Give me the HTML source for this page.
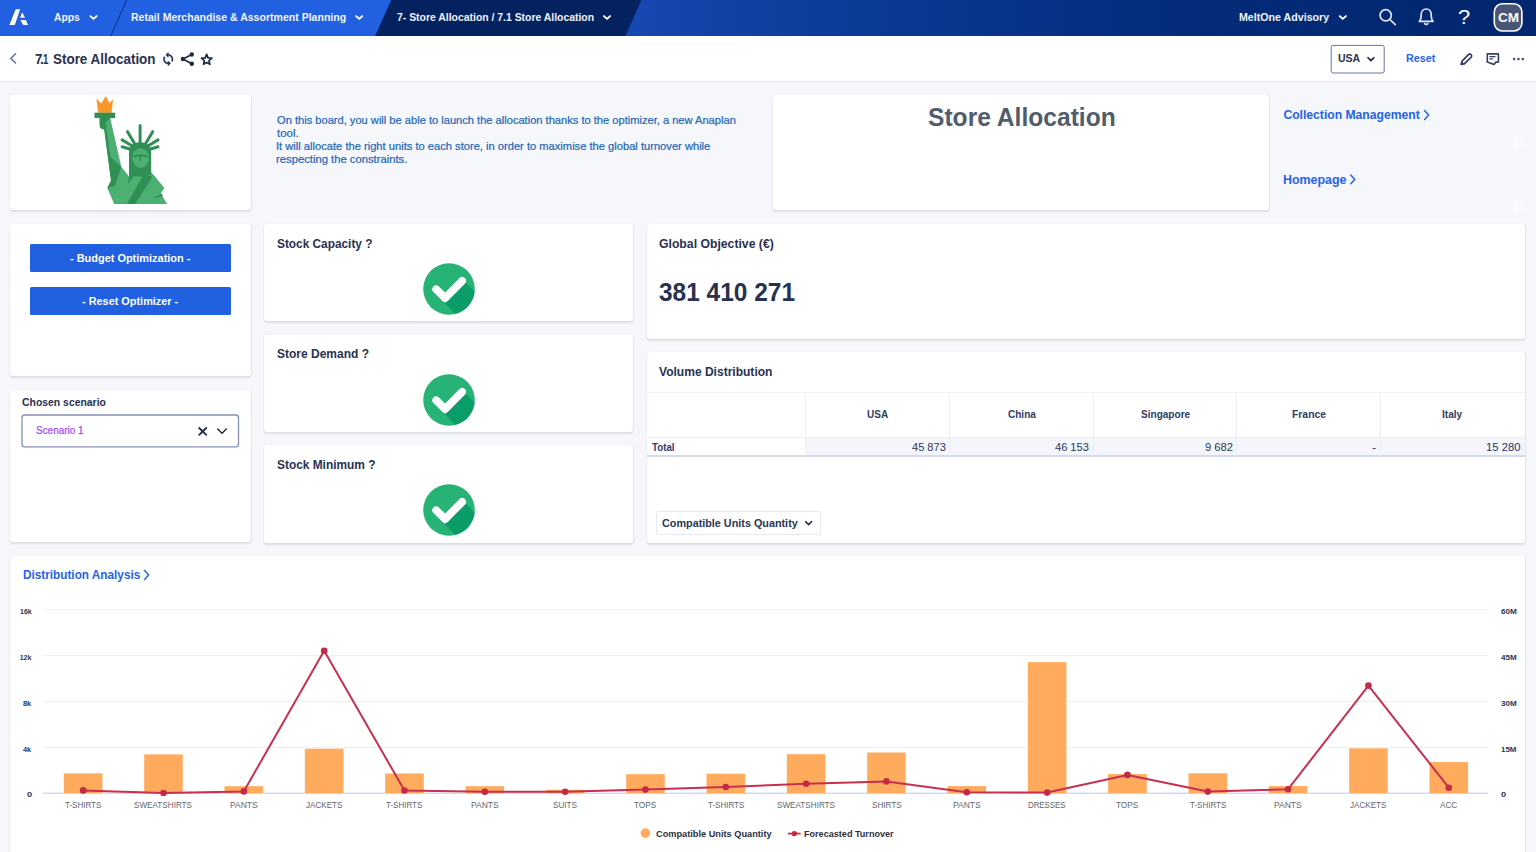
<!DOCTYPE html>
<html><head><meta charset="utf-8"><title>7.1 Store Allocation</title>
<style>
html,body{margin:0;padding:0}
body{width:1536px;height:852px;overflow:hidden;background:#f6f7fa;position:relative;font-family:"Liberation Sans",sans-serif}
#nav{position:absolute;left:0;top:0;width:1536px;height:36px;overflow:hidden}
#sub{position:absolute;left:0;top:36px;width:1536px;height:45px;background:#fff;border-bottom:1px solid #e3e9f6}
.t{position:absolute;white-space:nowrap;transform-origin:0 50%}
.card{position:absolute;background:#fff;border-radius:3px;box-shadow:0 1.5px 2px rgba(20,25,45,0.11),0.5px 0 1.5px rgba(20,25,45,0.05);box-sizing:border-box}
.btn{position:absolute;background:#2160e0;border-radius:1.5px}
</style></head><body>
<div id="nav">
<svg width="1536" height="36" viewBox="0 0 1536 36" style="position:absolute;left:0;top:0">
<defs><linearGradient id="ng" x1="0" x2="1" y1="0" y2="0">
<stop offset="0.04" stop-color="#1747b0"/><stop offset="0.21" stop-color="#0e3d9d"/><stop offset="0.43" stop-color="#07338a"/><stop offset="0.64" stop-color="#042b79"/><stop offset="1" stop-color="#03276e"/></linearGradient></defs>
<rect x="0" y="0" width="1536" height="36" fill="#2160e0"/>
<rect x="600" y="0" width="936" height="36" fill="url(#ng)"/>
<polygon points="391.2,0 641.5,0 625.4,36 375,36" fill="#04225f"/>
<line x1="126.6" y1="0" x2="110.8" y2="36" stroke="#0b2f8a" stroke-width="1"/>
<!-- logo -->
<polygon points="15.7,9.3 20.1,9.3 14.8,25 9.4,25" fill="#fff"/>
<polygon points="22.2,12.2 25,17.8 20.1,17.8" fill="#fff"/>
<polygon points="20.4,20.1 25.8,20.1 28.1,25 23.1,25" fill="#fff"/>
<!-- chevrons -->
<g fill="none" stroke="#fff" stroke-width="1.9" stroke-linecap="round" stroke-linejoin="round">
<polyline points="90.4,16.1 93.5,18.9 96.6,16.1"/>
<polyline points="356.1,16.1 359.2,18.9 362.3,16.1"/>
<polyline points="603.9,16.1 607,18.9 610.1,16.1"/>
<polyline points="1339.7,16.1 1342.8,18.9 1345.9,16.1"/>
</g>
<!-- search -->
<g fill="none" stroke="#e4e8f3" stroke-width="1.7" stroke-linecap="round">
<circle cx="1385.7" cy="15.3" r="5.6"/><line x1="1389.9" y1="19.5" x2="1395.3" y2="24.6"/>
</g>
<!-- bell -->
<g fill="none" stroke="#e4e8f3" stroke-width="1.7" stroke-linecap="round" stroke-linejoin="round">
<path d="M1419.3 21.3 C1421.3 19.6 1421.2 17.5 1421.2 14.6 C1421.2 11.2 1423.3 9 1426.2 9 C1429.1 9 1431.2 11.2 1431.2 14.6 C1431.2 17.5 1431.1 19.6 1433.1 21.3 Z"/>
<path d="M1424.6 23.6 Q1426.2 25.2 1427.8 23.6"/>
</g>
<!-- avatar -->
<rect x="1494.3" y="3.8" width="27.6" height="27.2" rx="8" fill="#4b5676" stroke="#fff" stroke-width="1.6"/>
</svg>
</div>
<div class="t" style="left:54.34px;top:9px;font-size:11.59px;line-height:16px;height:16px;font-weight:700;color:#f1f4fb;transform:scaleX(0.8928);">Apps</div>
<div class="t" style="left:131.11px;top:9px;font-size:11.59px;line-height:16px;height:16px;font-weight:700;color:#f1f4fb;transform:scaleX(0.9103);">Retail Merchandise &amp; Assortment Planning</div>
<div class="t" style="left:396.88px;top:9px;font-size:11.59px;line-height:16px;height:16px;font-weight:700;color:#f1f4fb;transform:scaleX(0.8993);">7- Store Allocation / 7.1 Store Allocation</div>
<div class="t" style="left:1238.81px;top:9px;font-size:11.45px;line-height:16px;height:16px;font-weight:700;color:#f1f4fb;transform:scaleX(0.9309);">MeltOne Advisory</div>
<div class="t" style="left:1458.33px;top:4px;font-size:19.55px;line-height:26px;height:26px;color:#fff;transform:scaleX(1.1187);">?</div>
<div class="t" style="left:1497.86px;top:9px;font-size:12.29px;line-height:18px;height:18px;font-weight:700;color:#fff;transform:scaleX(1.1036);">CM</div>
<div id="sub"></div>
<svg width="1536" height="46" viewBox="0 36 1536 46" style="position:absolute;left:0;top:36px">
<polyline points="15.6,53.8 10.8,58.4 15.6,63" fill="none" stroke="#5d6b98" stroke-width="1.4" stroke-linecap="round" stroke-linejoin="round"/>
<!-- refresh -->
<path transform="translate(161 51.95) scale(0.6)" fill="#26335a" stroke="#26335a" stroke-width="0.9" stroke-linejoin="round" d="M12 4V1L8 5l4 4V6c3.31 0 6 2.69 6 6 0 1.01-.25 1.97-.7 2.8l1.46 1.46C19.54 15.03 20 13.57 20 12c0-4.42-3.58-8-8-8zm0 14c-3.31 0-6-2.69-6-6 0-1.01.25-1.97.7-2.8L5.24 7.74C4.46 8.97 4 10.43 4 12c0 4.42 3.58 8 8 8v3l4-4-4-4v3z"/>
<!-- share -->
<g stroke="#1f2a44" stroke-width="1.6" fill="#1f2a44">
<line x1="182.9" y1="59" x2="191.8" y2="54.5"/><line x1="182.9" y1="59" x2="191.8" y2="63.7"/>
<circle cx="191.8" cy="54.5" r="1.4"/><circle cx="191.8" cy="63.7" r="1.4"/><circle cx="182.9" cy="59" r="1.4"/>
</g>
<!-- star -->
<polygon points="206.65,54.40 208.09,57.92 211.88,58.20 208.98,60.66 209.88,64.35 206.65,62.35 203.42,64.35 204.32,60.66 201.42,58.20 205.21,57.92" fill="none" stroke="#1f2a44" stroke-width="1.7" stroke-linejoin="round"/>
<!-- USA box -->
<rect x="1331.2" y="45.4" width="53" height="27.6" rx="2" fill="#fff" stroke="#6674a3" stroke-width="1"/>
<polyline points="1367.9,57.7 1370.9,60.6 1373.9,57.7" fill="none" stroke="#1f2a44" stroke-width="1.6" stroke-linecap="round" stroke-linejoin="round"/>
<!-- pencil -->
<g fill="none" stroke="#333e62" stroke-width="1.7" stroke-linejoin="round" stroke-linecap="round">
<path d="M1461.2 64.5 L1461.9 61.3 L1468.6 54.4 Q1469.7 53.4 1470.8 54.5 L1471.2 54.9 Q1472.2 56 1471.2 57.1 L1464.3 63.9 Z"/>
<path d="M1461.4 64.3 L1462.6 62.4 L1463.4 63.4 Z" fill="#333e62" stroke-width="1"/>
</g>
<!-- comment -->
<g fill="none" stroke="#333e62" stroke-width="1.6" stroke-linejoin="round" stroke-linecap="round">
<path d="M1487.3 53.9 H1498.4 V62.1 H1495.9 L1494.1 64.5 L1487.3 61.9 Z"/>
<path d="M1489.9 56.6 H1495.1 M1489.9 58.9 H1492.6" stroke-width="1.3"/>
</g>
<g fill="#4a5479"><circle cx="1514.1" cy="59.1" r="1.3"/><circle cx="1518.45" cy="59.1" r="1.3"/><circle cx="1522.8" cy="59.1" r="1.3"/></g>
</svg>
<div class="t" style="left:34.57px;top:49px;font-size:13.97px;line-height:20px;height:20px;font-weight:700;color:#283150;transform:scaleX(0.9496);">7</div>
<div class="t" style="left:40.00px;top:49px;font-size:13.97px;line-height:20px;height:20px;font-weight:700;color:#283150;transform:scaleX(0.9876);">.</div>
<div class="t" style="left:43.13px;top:49px;font-size:13.97px;line-height:20px;height:20px;font-weight:700;color:#283150;transform:scaleX(0.6855);">1</div>
<div class="t" style="left:52.90px;top:49px;font-size:13.97px;line-height:20px;height:20px;font-weight:700;color:#283150;transform:scaleX(0.9619);">Store Allocation</div>
<div class="t" style="left:1338.27px;top:50px;font-size:10.89px;line-height:16px;height:16px;font-weight:700;color:#283150;transform:scaleX(0.9655);">USA</div>
<div class="t" style="left:1405.60px;top:50px;font-size:10.89px;line-height:16px;height:16px;font-weight:700;color:#2563eb;transform:scaleX(0.9891);">Reset</div>
<div class="card" style="left:9.5px;top:95.3px;width:241.0px;height:114.7px;"></div>
<div class="card" style="left:773px;top:95.3px;width:496.29999999999995px;height:114.7px;"></div>
<div class="card" style="left:9.5px;top:224px;width:241.0px;height:152px;"></div>
<div class="card" style="left:9.5px;top:390px;width:241.0px;height:152px;"></div>
<div class="card" style="left:264px;top:224px;width:369px;height:96.80000000000001px;"></div>
<div class="card" style="left:264px;top:334.5px;width:369px;height:97.30000000000001px;"></div>
<div class="card" style="left:264px;top:445px;width:369px;height:97.5px;"></div>
<div class="card" style="left:646.5px;top:224px;width:878.0px;height:114.5px;"></div>
<div class="card" style="left:646.5px;top:352px;width:878.0px;height:190.5px;"></div>
<div class="card" style="left:9.5px;top:555.5px;width:1515.0px;height:314.5px;"></div>
<svg width="241" height="114" viewBox="9.5 95.5 241 114" style="position:absolute;left:9.5px;top:95.5px">
<polygon points="97.9,112 96.3,98.9 101,103.4 105.1,96.1 109.1,103.2 112.1,99.3 110.9,112" fill="#f9962a" stroke="#f9962a" stroke-width="0.6" stroke-linejoin="round"/>
<rect x="94" y="112.2" width="20.7" height="5.3" fill="#2f8f55"/>
<path d="M99 117.5 H109.7 V124 L104.5 129 Q99 129 99 124.5 Z" fill="#2f8f55"/>
<polygon points="103.1,124 109.7,117.6 120.9,166.7 128.5,176 113,200 106.9,187.6 110.5,180" fill="#4bb072"/>
<polygon points="103.1,124 105.1,123 109.8,156 120.7,166.6 114.8,185.5 106.9,187.6 110.5,180" fill="#2f8f55"/>
<polygon points="106.9,187.6 114.8,185.5 120.7,166.6 128.5,177 139.6,172 150.7,172 152.8,173.9 163.9,187.6 160.2,192.9 166.6,203.5 113.7,203.5" fill="#4bb072"/>
<polygon points="142.3,175 149.7,175 151.6,177 134.6,203.5 126.4,203.5" fill="#2f8f55"/>
<polygon points="128.5,176 133,176 127.5,183.5" fill="#2f8f55"/>
<polygon points="152.8,198.2 161.3,192.9 162.4,195.6" fill="#2f8f55"/>
<g stroke="#2f8f55" stroke-width="3" stroke-linecap="round">
<line x1="139.6" y1="125" x2="139.6" y2="142"/>
<line x1="127" y1="131.2" x2="134" y2="143"/><line x1="152.2" y1="131.2" x2="145.2" y2="143"/>
<line x1="121.6" y1="139.4" x2="131" y2="145"/><line x1="157.5" y1="139.4" x2="148.2" y2="145"/>
<line x1="121.6" y1="146.3" x2="130" y2="148.7"/><line x1="157.5" y1="146.3" x2="149.2" y2="148.7"/>
</g>
<path d="M128.5 177 V152 Q128.5 141.8 139.6 141.8 Q150.7 141.8 150.7 152 V173.5 L146 176 H133 Z" fill="#2f8f55"/>
<ellipse cx="140.1" cy="157.6" rx="8.4" ry="9.9" fill="#4bb072"/>
<path d="M133.8 156 Q139.6 153.6 146.4 156" fill="none" stroke="#2f8f55" stroke-width="2.1" stroke-linecap="round"/>
<line x1="139.7" y1="156" x2="139.7" y2="159.4" stroke="#2f8f55" stroke-width="1.6" stroke-linecap="round"/>
</svg>
<div class="t" style="left:276.50px;top:112px;font-size:10.61px;line-height:16px;height:16px;color:#2266b4;transform:scaleX(1.0470);-webkit-text-stroke:0.2px #2266b4;">On this board, you will be able to launch the allocation thanks to the optimizer, a new Anaplan</div>
<div class="t" style="left:276.83px;top:125px;font-size:10.61px;line-height:16px;height:16px;color:#2266b4;transform:scaleX(1.0850);-webkit-text-stroke:0.2px #2266b4;">tool.</div>
<div class="t" style="left:276.00px;top:138px;font-size:10.61px;line-height:16px;height:16px;color:#2266b4;transform:scaleX(1.0506);-webkit-text-stroke:0.2px #2266b4;">It will allocate the right units to each store, in order to maximise the global turnover while</div>
<div class="t" style="left:276.27px;top:151px;font-size:10.61px;line-height:16px;height:16px;color:#2266b4;transform:scaleX(1.0603);-webkit-text-stroke:0.2px #2266b4;">respecting the constraints.</div>
<div class="t" style="left:927.96px;top:100px;font-size:25.98px;line-height:34px;height:34px;font-weight:700;color:#505d6c;transform:scaleX(0.9476);">Store Allocation</div>
<div class="t" style="left:1283.41px;top:106px;font-size:12.15px;line-height:18px;height:18px;font-weight:700;color:#2563eb;">Collection Management</div>
<div class="t" style="left:1283.09px;top:171px;font-size:12.15px;line-height:18px;height:18px;font-weight:700;color:#2563eb;transform:scaleX(1.0234);">Homepage</div>
<svg width="1536" height="852" style="position:absolute;left:0;top:0;pointer-events:none">
<g fill="none" stroke="#2563eb" stroke-width="1.5" stroke-linecap="round" stroke-linejoin="round">
<polyline points="1424.6,110.6 1428.6,115 1424.6,119.4"/>
<polyline points="1350.8,175 1354.8,179.4 1350.8,183.8"/>
<polyline points="144.6,570.6 148.6,575 144.6,579.4"/>
</g></svg>
<div style="position:absolute;left:1513px;top:135.5px;width:12px;height:13px;border-radius:3px;background:#fff;opacity:.4"></div><div style="position:absolute;left:1513px;top:199.5px;width:12px;height:13px;border-radius:3px;background:#fff;opacity:.4"></div>
<div class="btn" style="left:29.5px;top:243.5px;width:201.4px;height:28.9px"></div>
<div class="btn" style="left:29.5px;top:286.6px;width:201.4px;height:28.9px"></div>
<div class="t" style="left:69.91px;top:250px;font-size:11.31px;line-height:16px;height:16px;font-weight:700;color:#fff;transform:scaleX(0.9689);">- Budget Optimization -</div>
<div class="t" style="left:82.01px;top:293px;font-size:11.31px;line-height:16px;height:16px;font-weight:700;color:#fff;transform:scaleX(0.9642);">- Reset Optimizer -</div>
<div class="t" style="left:22.38px;top:394px;font-size:11.03px;line-height:16px;height:16px;font-weight:700;color:#283150;transform:scaleX(0.9455);">Chosen scenario</div>
<svg width="230" height="40" viewBox="15 410 230 40" style="position:absolute;left:15px;top:410px"><rect x="22" y="415" width="216.5" height="31.8" rx="2.6" fill="#fff" stroke="#868fb2" stroke-width="1.3"/></svg>
<div class="t" style="left:36.25px;top:423px;font-size:10.47px;line-height:15px;height:15px;color:#a350f0;transform:scaleX(0.9506);-webkit-text-stroke:0.25px #a350f0;">Scenario 1</div>
<svg width="40" height="20" viewBox="195 421 40 20" style="position:absolute;left:195px;top:421px">
<g stroke="#1f2a44" stroke-width="1.8" stroke-linecap="round"><line x1="199.2" y1="428" x2="206.2" y2="434.8"/><line x1="206.2" y1="428" x2="199.2" y2="434.8"/></g>
<polyline points="217.6,428.9 222,433.2 226.4,428.9" fill="none" stroke="#1f2a44" stroke-width="1.4" stroke-linecap="round" stroke-linejoin="round"/>
</svg>
<div class="t" style="left:276.64px;top:234px;font-size:12.71px;line-height:19px;height:19px;font-weight:700;color:#283150;transform:scaleX(0.9323);">Stock Capacity ?</div>
<svg width="60" height="60" viewBox="419 259.2 60 60" style="position:absolute;left:419px;top:259.2px">
<defs><clipPath id="cc0"><circle cx="449" cy="289.2" r="25.8"/></clipPath></defs>
<circle cx="449" cy="289.2" r="25.8" fill="#27b376"/>
<polygon clip-path="url(#cc0)" points="445.2,303.59999999999997 465.6,282.59999999999997 490,307.2 470,329.2" fill="#0b9d68"/>
<polyline points="436.2,289.5 445.2,298.3 462.1,281.09999999999997" fill="none" stroke="#fff" stroke-width="7.8" stroke-linecap="round" stroke-linejoin="round"/>
</svg>
<div class="t" style="left:276.64px;top:344px;font-size:12.71px;line-height:19px;height:19px;font-weight:700;color:#283150;transform:scaleX(0.9446);">Store Demand ?</div>
<svg width="60" height="60" viewBox="419 369.79999999999995 60 60" style="position:absolute;left:419px;top:369.79999999999995px">
<defs><clipPath id="cc1"><circle cx="449" cy="399.79999999999995" r="25.8"/></clipPath></defs>
<circle cx="449" cy="399.79999999999995" r="25.8" fill="#27b376"/>
<polygon clip-path="url(#cc1)" points="445.2,414.19999999999993 465.6,393.19999999999993 490,417.79999999999995 470,439.79999999999995" fill="#0b9d68"/>
<polyline points="436.2,400.09999999999997 445.2,408.9 462.1,391.69999999999993" fill="none" stroke="#fff" stroke-width="7.8" stroke-linecap="round" stroke-linejoin="round"/>
</svg>
<div class="t" style="left:276.64px;top:455px;font-size:12.71px;line-height:19px;height:19px;font-weight:700;color:#283150;transform:scaleX(0.9361);">Stock Minimum ?</div>
<svg width="60" height="60" viewBox="419 480.4 60 60" style="position:absolute;left:419px;top:480.4px">
<defs><clipPath id="cc2"><circle cx="449" cy="510.4" r="25.8"/></clipPath></defs>
<circle cx="449" cy="510.4" r="25.8" fill="#27b376"/>
<polygon clip-path="url(#cc2)" points="445.2,524.8 465.6,503.79999999999995 490,528.4 470,550.4" fill="#0b9d68"/>
<polyline points="436.2,510.7 445.2,519.5 462.1,502.29999999999995" fill="none" stroke="#fff" stroke-width="7.8" stroke-linecap="round" stroke-linejoin="round"/>
</svg>
<div class="t" style="left:658.71px;top:235px;font-size:12.57px;line-height:18px;height:18px;font-weight:700;color:#283150;transform:scaleX(0.9730);">Global Objective (€)</div>
<div class="t" style="left:658.59px;top:275px;font-size:25.98px;line-height:34px;height:34px;font-weight:700;color:#283150;transform:scaleX(0.9418);">381 410 271</div>
<div class="t" style="left:659.14px;top:363px;font-size:12.57px;line-height:18px;height:18px;font-weight:700;color:#283150;transform:scaleX(0.9579);">Volume Distribution</div>
<div style="position:absolute;left:646.5px;top:392px;width:878px;height:1px;background:#eff2f8"></div>
<div style="position:absolute;left:646.5px;top:436.5px;width:878px;height:1px;background:#edf0f7"></div>
<div style="position:absolute;left:806px;top:437.5px;width:718.5px;height:18px;background:#f4f6fb"></div>
<div style="position:absolute;left:646.5px;top:455.3px;width:878px;height:1.3px;background:#d3d9ea"></div>
<div style="position:absolute;left:805.4px;top:392px;width:1px;height:63.5px;background:#ecf0f8"></div>
<div style="position:absolute;left:949.0px;top:392px;width:1px;height:63.5px;background:#ecf0f8"></div>
<div style="position:absolute;left:1092.6px;top:392px;width:1px;height:63.5px;background:#ecf0f8"></div>
<div style="position:absolute;left:1236.2px;top:392px;width:1px;height:63.5px;background:#ecf0f8"></div>
<div style="position:absolute;left:1379.8px;top:392px;width:1px;height:63.5px;background:#ecf0f8"></div>
<div class="t" style="left:867.45px;top:406px;font-size:10.75px;line-height:16px;height:16px;font-weight:700;color:#303c64;transform:scaleX(0.9322);">USA</div>
<div class="t" style="left:1007.65px;top:406px;font-size:10.75px;line-height:16px;height:16px;font-weight:700;color:#303c64;transform:scaleX(0.9316);">China</div>
<div class="t" style="left:1140.85px;top:406px;font-size:10.75px;line-height:16px;height:16px;font-weight:700;color:#303c64;transform:scaleX(0.9347);">Singapore</div>
<div class="t" style="left:1291.83px;top:406px;font-size:10.75px;line-height:16px;height:16px;font-weight:700;color:#303c64;transform:scaleX(0.9650);">France</div>
<div class="t" style="left:1442.19px;top:406px;font-size:10.75px;line-height:16px;height:16px;font-weight:700;color:#303c64;transform:scaleX(0.9395);">Italy</div>
<div class="t" style="left:911.78px;top:440px;font-size:10.34px;line-height:15px;height:15px;color:#2b3558;transform:scaleX(1.0708);">45 873</div>
<div class="t" style="left:1055.38px;top:440px;font-size:10.34px;line-height:15px;height:15px;color:#2b3558;transform:scaleX(1.0708);">46 153</div>
<div class="t" style="left:1204.89px;top:440px;font-size:10.34px;line-height:15px;height:15px;color:#2b3558;transform:scaleX(1.0863);">9 682</div>
<div class="t" style="left:1372.45px;top:440px;font-size:10.34px;line-height:15px;height:15px;color:#2b3558;transform:scaleX(1.1848);">-</div>
<div class="t" style="left:1485.56px;top:440px;font-size:10.34px;line-height:15px;height:15px;color:#2b3558;transform:scaleX(1.0889);">15 280</div>
<div class="t" style="left:651.50px;top:440px;font-size:10.34px;line-height:15px;height:15px;font-weight:700;color:#303c64;transform:scaleX(0.9438);">Total</div>
<div style="position:absolute;left:656.2px;top:510.7px;width:164.6px;height:24.8px;border:1px solid #e4e9f5;border-radius:2px;box-sizing:border-box;background:#fff"></div>
<div class="t" style="left:662.17px;top:515px;font-size:11.59px;line-height:16px;height:16px;font-weight:700;color:#2b3558;transform:scaleX(0.9337);">Compatible Units Quantity</div>
<svg width="12" height="10" viewBox="803 518 12 10" style="position:absolute;left:803px;top:518px"><polyline points="805.6,521.7 808.6,524.6 811.6,521.7" fill="none" stroke="#2b3558" stroke-width="1.6" stroke-linecap="round" stroke-linejoin="round"/></svg>
<div class="t" style="left:23.13px;top:566px;font-size:12.29px;line-height:18px;height:18px;font-weight:700;color:#2563eb;transform:scaleX(0.9580);">Distribution Analysis</div>
<svg width="1536" height="300" viewBox="0 552 1536 300" style="position:absolute;left:0;top:552px">
<rect x="43" y="609.1" width="1445" height="1" fill="#efeff2"/>
<rect x="43" y="655.1" width="1445" height="1" fill="#efeff2"/>
<rect x="43" y="701.1" width="1445" height="1" fill="#efeff2"/>
<rect x="43" y="747.0" width="1445" height="1" fill="#efeff2"/>
<rect x="43" y="792.6" width="1445" height="1.3" fill="#c9d8f2"/>
<rect x="63.86" y="773.40" width="38.6" height="19.80" fill="#ffab5e"/>
<rect x="144.19" y="754.40" width="38.6" height="38.80" fill="#ffab5e"/>
<rect x="224.52" y="786.20" width="38.6" height="7.00" fill="#ffab5e"/>
<rect x="304.85" y="748.70" width="38.6" height="44.50" fill="#ffab5e"/>
<rect x="385.19" y="773.50" width="38.6" height="19.70" fill="#ffab5e"/>
<rect x="465.51" y="786.20" width="38.6" height="7.00" fill="#ffab5e"/>
<rect x="545.85" y="789.80" width="38.6" height="3.40" fill="#ffab5e"/>
<rect x="626.18" y="774.20" width="38.6" height="19.00" fill="#ffab5e"/>
<rect x="706.50" y="773.70" width="38.6" height="19.50" fill="#ffab5e"/>
<rect x="786.84" y="754.20" width="38.6" height="39.00" fill="#ffab5e"/>
<rect x="867.17" y="752.50" width="38.6" height="40.70" fill="#ffab5e"/>
<rect x="947.50" y="786.10" width="38.6" height="7.10" fill="#ffab5e"/>
<rect x="1027.83" y="662.10" width="38.6" height="131.10" fill="#ffab5e"/>
<rect x="1108.15" y="774.10" width="38.6" height="19.10" fill="#ffab5e"/>
<rect x="1188.49" y="773.30" width="38.6" height="19.90" fill="#ffab5e"/>
<rect x="1268.82" y="786.10" width="38.6" height="7.10" fill="#ffab5e"/>
<rect x="1349.14" y="748.30" width="38.6" height="44.90" fill="#ffab5e"/>
<rect x="1429.47" y="762.10" width="38.6" height="31.10" fill="#ffab5e"/>
<polyline points="83.16,790.40 163.50,793.00 243.82,791.40 324.15,650.80 404.49,790.50 484.81,791.70 565.14,791.70 645.48,789.60 725.80,787.00 806.13,783.75 886.47,781.40 966.79,792.30 1047.12,792.60 1127.45,774.90 1207.79,791.60 1288.12,789.20 1368.44,685.60 1448.77,787.70" fill="none" stroke="#c8304f" stroke-width="2" stroke-linejoin="round"/>
<circle cx="83.16" cy="790.40" r="3.3" fill="#c42946"/>
<circle cx="163.50" cy="793.00" r="3.3" fill="#c42946"/>
<circle cx="243.82" cy="791.40" r="3.3" fill="#c42946"/>
<circle cx="324.15" cy="650.80" r="3.3" fill="#c42946"/>
<circle cx="404.49" cy="790.50" r="3.3" fill="#c42946"/>
<circle cx="484.81" cy="791.70" r="3.3" fill="#c42946"/>
<circle cx="565.14" cy="791.70" r="3.3" fill="#c42946"/>
<circle cx="645.48" cy="789.60" r="3.3" fill="#c42946"/>
<circle cx="725.80" cy="787.00" r="3.3" fill="#c42946"/>
<circle cx="806.13" cy="783.75" r="3.3" fill="#c42946"/>
<circle cx="886.47" cy="781.40" r="3.3" fill="#c42946"/>
<circle cx="966.79" cy="792.30" r="3.3" fill="#c42946"/>
<circle cx="1047.12" cy="792.60" r="3.3" fill="#c42946"/>
<circle cx="1127.45" cy="774.90" r="3.3" fill="#c42946"/>
<circle cx="1207.79" cy="791.60" r="3.3" fill="#c42946"/>
<circle cx="1288.12" cy="789.20" r="3.3" fill="#c42946"/>
<circle cx="1368.44" cy="685.60" r="3.3" fill="#c42946"/>
<circle cx="1448.77" cy="787.70" r="3.3" fill="#c42946"/>
<circle cx="645.4" cy="833.1" r="4.8" fill="#ffab5e"/>
<line x1="787.8" y1="833.6" x2="800.6" y2="833.6" stroke="#c8304f" stroke-width="1.8"/><circle cx="794.3" cy="833.6" r="2.7" fill="#c42946"/>
</svg>
<div class="t" style="left:65.16px;top:798px;font-size:8.80px;line-height:14px;height:14px;color:#63666e;transform:scaleX(0.9077);">T-SHIRTS</div>
<div class="t" style="left:134.48px;top:798px;font-size:8.80px;line-height:14px;height:14px;color:#63666e;transform:scaleX(0.9250);">SWEATSHIRTS</div>
<div class="t" style="left:229.85px;top:798px;font-size:8.80px;line-height:14px;height:14px;color:#63666e;transform:scaleX(0.9643);">PANTS</div>
<div class="t" style="left:306.08px;top:798px;font-size:8.80px;line-height:14px;height:14px;color:#63666e;transform:scaleX(0.9189);">JACKETS</div>
<div class="t" style="left:386.48px;top:798px;font-size:8.80px;line-height:14px;height:14px;color:#63666e;transform:scaleX(0.9077);">T-SHIRTS</div>
<div class="t" style="left:470.84px;top:798px;font-size:8.80px;line-height:14px;height:14px;color:#63666e;transform:scaleX(0.9643);">PANTS</div>
<div class="t" style="left:553.13px;top:798px;font-size:8.80px;line-height:14px;height:14px;color:#63666e;transform:scaleX(0.9275);">SUITS</div>
<div class="t" style="left:634.46px;top:798px;font-size:8.80px;line-height:14px;height:14px;color:#63666e;transform:scaleX(0.9342);">TOPS</div>
<div class="t" style="left:707.80px;top:798px;font-size:8.80px;line-height:14px;height:14px;color:#63666e;transform:scaleX(0.9077);">T-SHIRTS</div>
<div class="t" style="left:777.12px;top:798px;font-size:8.80px;line-height:14px;height:14px;color:#63666e;transform:scaleX(0.9250);">SWEATSHIRTS</div>
<div class="t" style="left:871.70px;top:798px;font-size:8.80px;line-height:14px;height:14px;color:#63666e;transform:scaleX(0.9207);">SHIRTS</div>
<div class="t" style="left:952.82px;top:798px;font-size:8.80px;line-height:14px;height:14px;color:#63666e;transform:scaleX(0.9643);">PANTS</div>
<div class="t" style="left:1028.25px;top:798px;font-size:8.80px;line-height:14px;height:14px;color:#63666e;transform:scaleX(0.8911);">DRESSES</div>
<div class="t" style="left:1116.44px;top:798px;font-size:8.80px;line-height:14px;height:14px;color:#63666e;transform:scaleX(0.9342);">TOPS</div>
<div class="t" style="left:1189.78px;top:798px;font-size:8.80px;line-height:14px;height:14px;color:#63666e;transform:scaleX(0.9077);">T-SHIRTS</div>
<div class="t" style="left:1274.14px;top:798px;font-size:8.80px;line-height:14px;height:14px;color:#63666e;transform:scaleX(0.9643);">PANTS</div>
<div class="t" style="left:1350.37px;top:798px;font-size:8.80px;line-height:14px;height:14px;color:#63666e;transform:scaleX(0.9189);">JACKETS</div>
<div class="t" style="left:1440.32px;top:798px;font-size:8.80px;line-height:14px;height:14px;color:#63666e;transform:scaleX(0.9256);">ACC</div>
<div class="t" style="left:19.58px;top:606px;font-size:6.98px;line-height:11px;height:11px;font-weight:700;color:#2b3558;transform:scaleX(1.0082);">16k</div>
<div class="t" style="left:19.68px;top:652px;font-size:6.98px;line-height:11px;height:11px;font-weight:700;color:#2b3558;">12k</div>
<div class="t" style="left:23.08px;top:698px;font-size:6.98px;line-height:11px;height:11px;font-weight:700;color:#2b3558;transform:scaleX(1.0607);">8k</div>
<div class="t" style="left:23.19px;top:744px;font-size:6.98px;line-height:11px;height:11px;font-weight:700;color:#2b3558;transform:scaleX(1.0462);">4k</div>
<div class="t" style="left:26.53px;top:789px;font-size:6.98px;line-height:11px;height:11px;font-weight:700;color:#2b3558;transform:scaleX(1.3265);">0</div>
<div class="t" style="left:1500.71px;top:606px;font-size:6.98px;line-height:11px;height:11px;font-weight:700;color:#2b3558;transform:scaleX(1.1674);">60M</div>
<div class="t" style="left:1500.88px;top:652px;font-size:6.98px;line-height:11px;height:11px;font-weight:700;color:#2b3558;transform:scaleX(1.1548);">45M</div>
<div class="t" style="left:1500.80px;top:698px;font-size:6.98px;line-height:11px;height:11px;font-weight:700;color:#2b3558;transform:scaleX(1.1611);">30M</div>
<div class="t" style="left:1500.52px;top:744px;font-size:6.98px;line-height:11px;height:11px;font-weight:700;color:#2b3558;transform:scaleX(1.1440);">15M</div>
<div class="t" style="left:1500.63px;top:789px;font-size:6.98px;line-height:11px;height:11px;font-weight:700;color:#2b3558;transform:scaleX(1.3265);">0</div>
<div class="t" style="left:655.73px;top:826px;font-size:9.78px;line-height:15px;height:15px;font-weight:700;color:#2f2f38;transform:scaleX(0.9427);">Compatible Units Quantity</div>
<div class="t" style="left:804.41px;top:826px;font-size:9.78px;line-height:15px;height:15px;font-weight:700;color:#2f2f38;transform:scaleX(0.9294);">Forecasted Turnover</div>
</body></html>
